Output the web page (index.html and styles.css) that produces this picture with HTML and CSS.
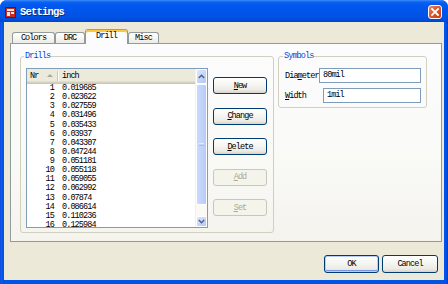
FILE: index.html
```html
<!DOCTYPE html>
<html>
<head>
<meta charset="utf-8">
<link rel="stylesheet" href="styles.css">
</head>
<body>
<div class="window">
  <div class="titlebar">
    <svg class="app-icon" width="11" height="11" viewBox="0 0 11 11">
      <rect x="0.5" y="0.5" width="10" height="10" fill="#C92A1E" stroke="#6A1410"/>
      <rect x="2" y="2" width="7" height="2" fill="#FFE9E0"/>
      <rect x="2" y="5" width="3" height="4" fill="#FFE9E0"/>
      <rect x="6" y="5" width="3" height="2" fill="#FFE9E0"/>
    </svg>
    <span class="title">Settings</span>
    <div class="close">
      <svg width="12" height="12" viewBox="0 0 12 12"><path d="M3 3 L9 9 M9 3 L3 9" stroke="#fff" stroke-width="1.8" stroke-linecap="square"/></svg>
    </div>
  </div>
  <div class="frame">
    <div class="tabs">
      <div class="tab tab-colors">Colors</div>
      <div class="tab tab-drc">DRC</div>
      <div class="tab tab-drill active">Drill</div>
      <div class="tab tab-misc">Misc</div>
    </div>
    <div class="pane">
      <fieldset class="group drills">
        <legend>Drills</legend>
        <div class="group-body">
          <div class="listview">
            <div class="lv-main">
              <div class="lv-header">
                <div class="h-nr">Nr<span class="sort"></span></div>
                <div class="h-sep"></div>
                <div class="h-inch">inch</div>
              </div>
              <div class="lv-rows">
                <div class="row"><span class="c-nr">1</span><span class="c-val">0.019685</span></div>
                <div class="row"><span class="c-nr">2</span><span class="c-val">0.023622</span></div>
                <div class="row"><span class="c-nr">3</span><span class="c-val">0.027559</span></div>
                <div class="row"><span class="c-nr">4</span><span class="c-val">0.031496</span></div>
                <div class="row"><span class="c-nr">5</span><span class="c-val">0.035433</span></div>
                <div class="row"><span class="c-nr">6</span><span class="c-val">0.03937</span></div>
                <div class="row"><span class="c-nr">7</span><span class="c-val">0.043307</span></div>
                <div class="row"><span class="c-nr">8</span><span class="c-val">0.047244</span></div>
                <div class="row"><span class="c-nr">9</span><span class="c-val">0.051181</span></div>
                <div class="row"><span class="c-nr">10</span><span class="c-val">0.055118</span></div>
                <div class="row"><span class="c-nr">11</span><span class="c-val">0.059055</span></div>
                <div class="row"><span class="c-nr">12</span><span class="c-val">0.062992</span></div>
                <div class="row"><span class="c-nr">13</span><span class="c-val">0.07874</span></div>
                <div class="row"><span class="c-nr">14</span><span class="c-val">0.086614</span></div>
                <div class="row"><span class="c-nr">15</span><span class="c-val">0.110236</span></div>
                <div class="row"><span class="c-nr">16</span><span class="c-val">0.125984</span></div>
              </div>
            </div>
            <div class="vscroll">
              <div class="sb-btn sb-up"><svg width="7" height="5" viewBox="0 0 7 5"><path d="M0.8 4 L3.5 1.3 L6.2 4" fill="none" stroke="#4D6185" stroke-width="1.4"/></svg></div>
              <div class="sb-thumb"><span class="grip"></span></div>
              <div class="sb-track"></div>
              <div class="sb-btn sb-down"><svg width="7" height="5" viewBox="0 0 7 5"><path d="M0.8 1 L3.5 3.7 L6.2 1" fill="none" stroke="#4D6185" stroke-width="1.4"/></svg></div>
            </div>
          </div>
          <div class="btncol">
            <button class="btn"><u>N</u>ew</button>
            <button class="btn"><u>C</u>hange</button>
            <button class="btn"><u>D</u>elete</button>
            <button class="btn" disabled><u>A</u>dd</button>
            <button class="btn" disabled><u>S</u>et</button>
          </div>
        </div>
      </fieldset>
      <fieldset class="group symbols">
        <legend>Symbols</legend>
        <div class="fields">
          <div class="field"><span class="label">Dia<u>m</u>eter</span><div class="input input-diameter">80mil</div></div>
          <div class="field"><span class="label"><u>W</u>idth</span><div class="input input-width">1mil</div></div>
        </div>
      </fieldset>
    </div>
    <div class="footer">
      <button class="btn btn-ok default">OK</button>
      <button class="btn btn-cancel">Cancel</button>
    </div>
  </div>
</div>
</body>
</html>
```

FILE: styles.css
```css
* { box-sizing: border-box; }

html, body {
  margin: 0;
  width: 448px;
  height: 284px;
  overflow: hidden;
  background: #ffffff;
}

body {
  font-family: "Liberation Mono", "DejaVu Sans Mono", monospace;
  font-size: 8.5px;
  letter-spacing: -0.9px;
  color: #000;
}

u { text-decoration: underline; text-underline-offset: 1px; }

.window {
  width: 448px;
  height: 284px;
  display: flex;
  flex-direction: column;
  background: linear-gradient(90deg, #0831D9 0, #166AEE 1px, #0055E5 2px, #0055E5 446px, #0831D9 448px);
  border-radius: 7px 7px 0 0;
  overflow: hidden;
}

.titlebar {
  height: 22px;
  flex: none;
  display: flex;
  align-items: center;
  padding: 0 6px 0 5px;
  background: linear-gradient(180deg, #3D8EF7 0, #0D62F2 2px, #0058EE 5px, #0055EA 11px, #0052E3 17px, #0049D3 21px, #0042C6 22px);
}

.app-icon {
  flex: none;
  margin-right: 4px;
  margin-top: 2px;
}

.title {
  color: #fff;
  font-weight: bold;
  font-size: 10.5px;
  letter-spacing: -0.8px;
  text-shadow: 1px 1px 0 #0A2A8C;
  margin-top: 1px;
}

.close {
  margin-left: auto;
  width: 14px;
  height: 14px;
  margin-top: 1px;
  border: 1px solid #fff;
  border-radius: 3px;
  background: linear-gradient(135deg, #EE8866 0, #E25A30 40%, #C93B10 100%);
  display: flex;
  align-items: center;
  justify-content: center;
}

.frame {
  flex: 1;
  margin: 0 4px 4px 4px;
  background: #ECE9D8;
  display: flex;
  flex-direction: column;
  padding: 7px 2px 7px 6px;
}

.tabs {
  height: 14px;
  display: flex;
  align-items: flex-end;
  padding-left: 2px;
  flex: none;
}

.tab {
  height: 11px;
  border: 1px solid #919B9C;
  border-bottom: none;
  border-radius: 3px 3px 0 0;
  background: linear-gradient(180deg, #FFFFFF 0, #F7F6F2 50%, #ECEBE6 100%);
  text-align: center;
  line-height: 10px;
}

.tab-colors { width: 43px; }
.tab-drc { width: 30px; }
.tab-drill { width: 43px; }
.tab-misc { width: 31px; }

.tab.active {
  height: 15px;
  margin-bottom: -1px;
  position: relative;
  z-index: 1;
  background: #FCFCFE;
  border-top: 1px solid #E68B2C;
  box-shadow: inset 0 2px 0 #FFC83C;
  line-height: 12px;
}

.pane {
  height: 199px;
  flex: none;
  border: 1px solid #919B9C;
  background: linear-gradient(180deg, #FCFCFE 0, #F9F9F6 60%, #F4F3EE 100%);
  display: flex;
  align-items: flex-start;
  gap: 4px;
  padding: 7px 0 0 9px;
}

.group {
  margin: 0;
  min-width: 0;
  border: 1px solid #D0D0BF;
  border-radius: 3px;
}

.group legend {
  color: #0046D5;
  line-height: 10px;
  padding: 0 1px;
  margin-left: -2px;
}

.drills {
  width: 254px;
  padding: 7px 6px 4px 5px;
}

.group-body {
  display: flex;
  gap: 5px;
}

.listview {
  width: 182px;
  height: 160px;
  border: 1px solid #7F9DB9;
  background: #fff;
  display: flex;
}

.lv-main {
  flex: 1;
  display: flex;
  flex-direction: column;
  min-width: 0;
}

.lv-header {
  height: 15px;
  flex: none;
  display: flex;
  align-items: center;
  background: #EBEADB;
  box-shadow: inset 0 -1px 0 #CBC7B8, inset 0 -2px 0 #D6D2C2, inset 0 -3px 0 #E2DECD;
  padding-bottom: 2px;
}

.h-nr {
  width: 31px;
  padding-left: 3px;
  display: flex;
  align-items: center;
}

.sort {
  margin-left: 9px;
  width: 0;
  height: 0;
  border-left: 3px solid transparent;
  border-right: 3px solid transparent;
  border-bottom: 3px solid #ACA899;
}

.h-sep {
  width: 2px;
  height: 10px;
  border-left: 1px solid #CBC7B8;
  border-right: 1px solid #fff;
  margin-left: -1px;
}

.h-inch {
  padding-left: 3px;
}

.lv-rows {
  flex: 1;
  overflow: hidden;
}

.row {
  display: flex;
  height: 9.13px;
  line-height: 9.13px;
  white-space: nowrap;
}

.c-nr {
  width: 31px;
  flex: none;
  text-align: right;
  padding-right: 4px;
}

.c-val {
  padding-left: 4px;
}

.vscroll {
  width: 12px;
  flex: none;
  display: flex;
  flex-direction: column;
  background: #FAF9F5;
  border-left: 1px solid #EEF1F8;
}

.sb-btn {
  flex: none;
  display: flex;
  align-items: center;
  justify-content: center;
  border: 1px solid #fff;
  border-radius: 2px;
  background: linear-gradient(135deg, #DCE6FD 0, #C2D3FB 60%, #B3C8F5 100%);
}

.sb-up { height: 15px; }
.sb-down { height: 11px; }

.sb-thumb {
  height: 121px;
  flex: none;
  border: 1px solid #fff;
  border-radius: 2px;
  background: linear-gradient(90deg, #C9D8FC 0, #C1D2FB 60%, #B6C9F6 100%);
  display: flex;
  align-items: center;
  justify-content: center;
}

.grip {
  width: 5px;
  height: 3px;
  border-top: 1px solid #E4ECFE;
  border-bottom: 1px solid #A8BDEE;
}

.sb-track { flex: 1; }

.btncol {
  width: 54px;
  padding-top: 9px;
  display: flex;
  flex-direction: column;
  gap: 13.5px;
}

.btn {
  font-family: inherit;
  font-size: 8.5px;
  letter-spacing: -0.9px;
  color: #000;
  padding: 0;
  height: 17px;
  border: 1px solid #003C74;
  border-radius: 3px;
  background: linear-gradient(180deg, #FFFFFF 0, #F5F5F1 45%, #ECEBE6 80%, #D8D2C6 100%);
}

.btn:disabled {
  color: #ACA899;
  border-color: #C9C7BA;
  background: #F5F4EA;
}

.symbols {
  width: 149px;
  padding: 7px 5px 4px 6px;
}

.fields {
  display: flex;
  flex-direction: column;
  gap: 5px;
}

.field {
  display: flex;
  align-items: center;
  height: 15px;
}

.input {
  margin-left: auto;
  height: 15px;
  border: 1px solid #7F9DB9;
  background: #fff;
  line-height: 13px;
  padding-left: 3px;
}

.input-diameter { width: 102px; }
.input-width { width: 98px; }

.footer {
  margin-top: 13px;
  display: flex;
  justify-content: flex-end;
  gap: 3px;
  padding-right: 4px;
}

.footer .btn { height: 18px; }
.btn-ok { width: 55px; }
.btn-cancel { width: 56px; }

.btn.default {
  box-shadow: inset 0 0 0 1px #B7CDF3, inset 0 -1px 0 1px #7B97E6;
}
```
